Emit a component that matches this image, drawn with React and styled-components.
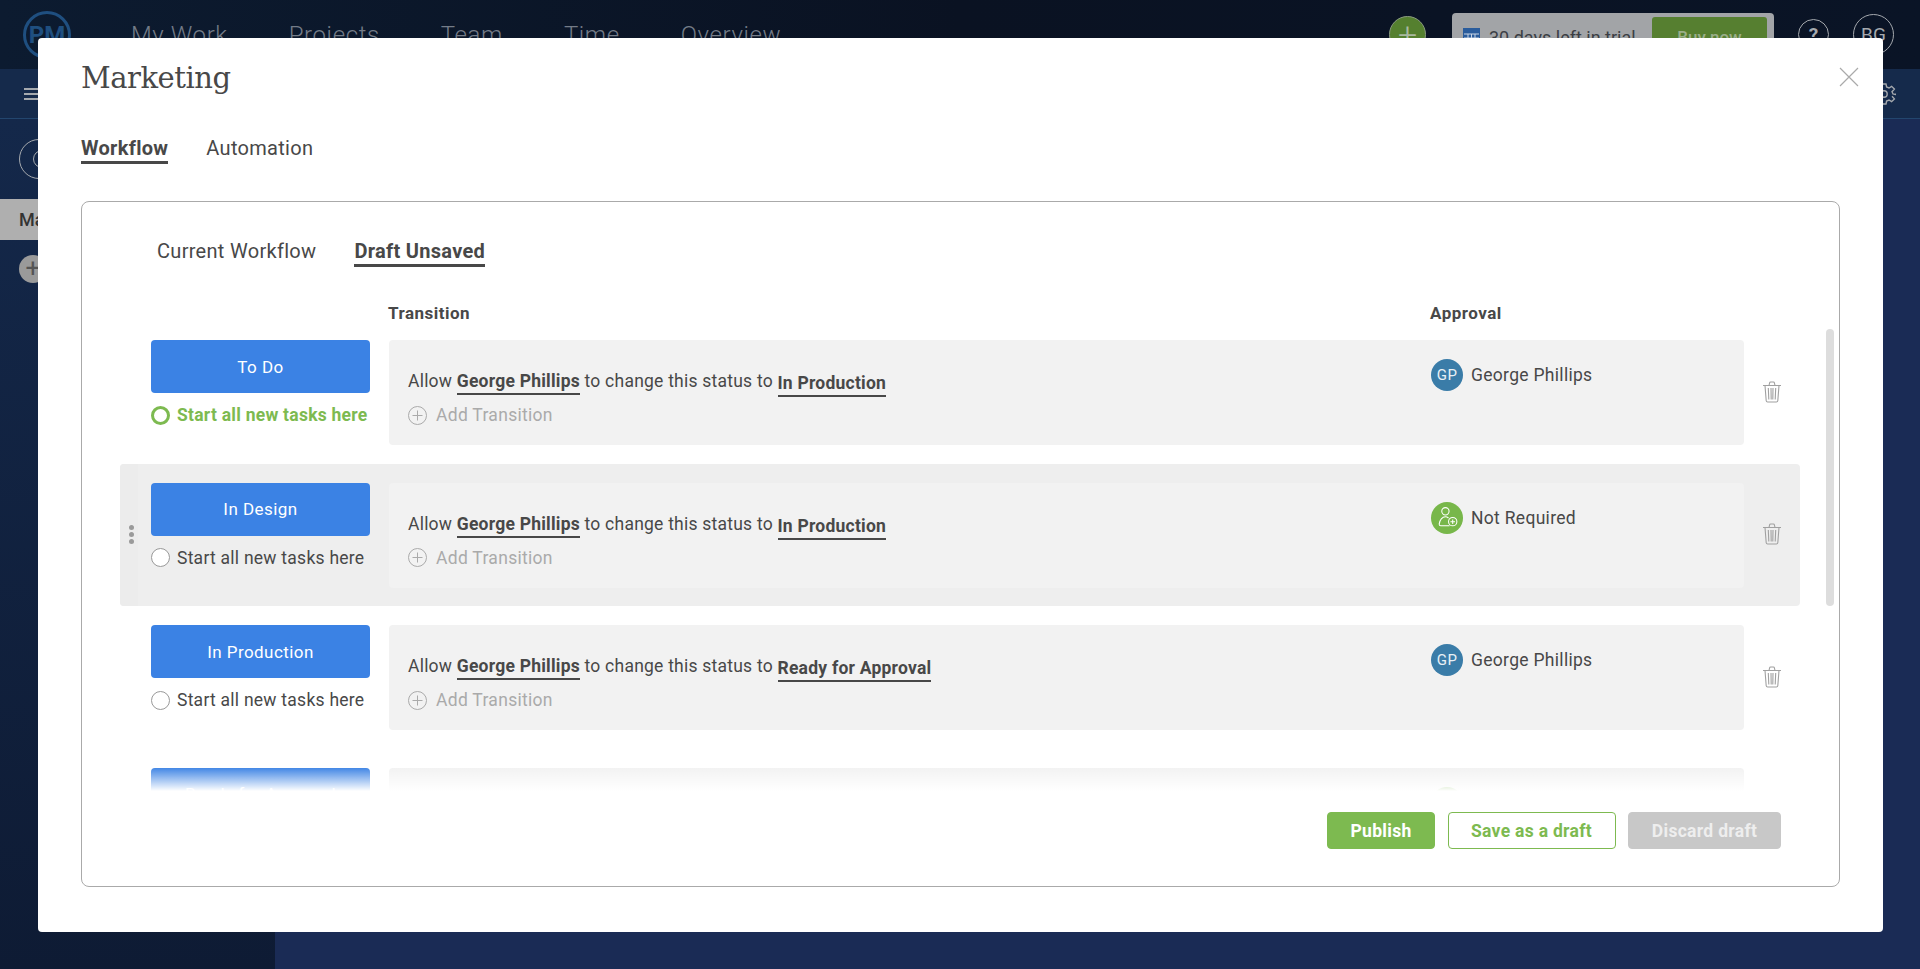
import React from "react";
import styled, { createGlobalStyle } from "styled-components";

const GlobalStyle = createGlobalStyle`
  html, body { margin: 0; padding: 0; height: 100%; overflow: hidden; background: #1a2b55; }
  body { font-family: Roboto, "Liberation Sans", sans-serif; color: #484848; }
  * { box-sizing: border-box; }
`;

const Page = styled.div`
  width: 1920px;
  height: 969px;
  display: flex;
  flex-direction: column;
  overflow: hidden;
`;

const TopNav = styled.header`
  height: 69px;
  flex: none;
  display: flex;
  align-items: center;
  padding: 0 26px 0 23px;
  background: linear-gradient(90deg, #0c1b30 0%, #0a1222 50%, #0a1426 100%);
`;

const Logo = styled.div`
  width: 48px;
  height: 48px;
  border: 3px solid #1f4f80;
  border-radius: 50%;
  display: flex;
  align-items: center;
  justify-content: center;
  color: #1f4f80;
  font-size: 24px;
  font-weight: 700;
`;

const NavLinks = styled.nav`
  display: flex;
  gap: 61px;
  margin-left: 60px;
  flex: 1;
`;

const NavLink = styled.span`
  font-size: 24px;
  font-weight: 300;
  letter-spacing: 0.6px;
  color: #747c88;
`;

const CreateButton = styled.div`
  width: 37px;
  height: 37px;
  border-radius: 50%;
  background: #55802f;
  border: 1px solid #8a9a80;
  color: #a9b8a0;
  font-size: 34px;
  font-weight: 300;
  display: flex;
  align-items: center;
  justify-content: center;
  margin-top: -1px;
`;

const TrialBox = styled.div`
  width: 322px;
  height: 48px;
  margin: 13px 0 8px 26px;
  padding: 4px 7px 4px 11px;
  background: #a2a4a7;
  border-radius: 4px;
  display: flex;
  align-items: center;
  align-self: flex-start;
`;

const TrialText = styled.span`
  font-size: 18px;
  color: #3b3e44;
  margin-left: 9px;
  flex: 1;
`;

const BuyNow = styled.div`
  width: 115px;
  height: 40px;
  background: #567f30;
  border-radius: 3px;
  color: #9aae8a;
  font-size: 17px;
  font-weight: 500;
  display: flex;
  align-items: center;
  justify-content: center;
`;

const RoundIcon = styled.div`
  width: ${(p) => p.$size}px;
  height: ${(p) => p.$size}px;
  margin-left: ${(p) => p.$left}px;
  border: 1px solid #a5a9ae;
  border-radius: 50%;
  color: #a5a9ae;
  font-size: 19px;
  font-weight: ${(p) => p.$weight || 400};
  display: flex;
  align-items: center;
  justify-content: center;
`;

const SubBar = styled.div`
  height: 50px;
  flex: none;
  display: flex;
  align-items: center;
  justify-content: space-between;
  padding: 0 24px;
  background: #152a4b;
  border-bottom: 1px solid #23466e;
`;

const Hamburger = styled.div`
  width: 15px;
  height: 12px;
  border-top: 2px solid #a5a9ae;
  border-bottom: 2px solid #a5a9ae;
  position: relative;
  &::after {
    content: "";
    position: absolute;
    left: 0;
    right: 0;
    top: 3px;
    height: 2px;
    background: #a5a9ae;
  }
`;

const Body = styled.div`
  flex: 1;
  display: flex;
`;

const Sidebar = styled.aside`
  width: 275px;
  background: linear-gradient(180deg, #14284a 0%, #0e1b34 100%);
  padding-top: 20px;
`;

const SearchCircle = styled.div`
  width: 50px;
  height: 40px;
  margin-left: 19px;
  padding-left: 13px;
  border: 1px solid #a5a9ae;
  border-radius: 20px;
  display: flex;
  align-items: center;
`;

const SearchGlass = styled.span`
  width: 18px;
  height: 18px;
  border: 1px solid #a5a9ae;
  border-radius: 50%;
`;

const SidebarItem = styled.div`
  height: 41px;
  margin-top: 20px;
  padding-left: 19px;
  background: #afafaf;
  color: #333;
  font-size: 18px;
  font-weight: 500;
  line-height: 41px;
`;

const SidebarAdd = styled.div`
  width: 28px;
  height: 28px;
  margin: 15px 0 0 19px;
  background: #9a9a9a;
  border-radius: 50%;
  color: #555;
  font-size: 26px;
  line-height: 26px;
  text-align: center;
`;

const Main = styled.main`
  flex: 1;
  background: #1a2b55;
`;

const Modal = styled.section`
  position: fixed;
  left: 38px;
  top: 38px;
  width: 1845px;
  height: 894px;
  background: #fff;
  border-radius: 4px;
  padding: 20px 43px 0;
  display: flex;
  flex-direction: column;
`;

const CloseButton = styled.button`
  position: absolute;
  top: 29px;
  right: 24px;
  width: 20px;
  height: 20px;
  padding: 0;
  border: 0;
  background: none;
`;

const Title = styled.h1`
  margin: 0;
  height: 40px;
  font-family: "DejaVu Serif", "Liberation Serif", serif;
  font-size: 29px;
  line-height: 40px;
  font-weight: 400;
  letter-spacing: -0.45px;
  color: #484848;
`;

const Tabs = styled.div`
  display: flex;
  gap: ${(p) => p.$gap}px;
  margin: ${(p) => p.$margin};
`;

const Tab = styled.span`
  height: 29px;
  font-size: 20px;
  line-height: 27px;
  letter-spacing: 0.3px;
  font-weight: ${(p) => (p.$active ? 700 : 400)};
  color: #484848;
  border-bottom: ${(p) => (p.$active ? "3px solid #484848" : "3px solid transparent")};
`;

const Panel = styled.div`
  position: relative;
  margin-top: 37px;
  height: 686px;
  border: 1px solid #aaa;
  border-radius: 8px;
  flex: none;
`;

const HeaderRow = styled.div`
  display: flex;
  margin: 36px 0 0 306px;
  height: 18px;
  font-size: 17px;
  font-weight: 700;
  letter-spacing: 0.5px;
  line-height: 21px;
  color: #484848;
`;

const HeaderCell = styled.span`
  width: ${(p) => p.$width}px;
`;

const ScrollArea = styled.div`
  position: relative;
  margin: 0 0 0 38px;
  width: 1714px;
  height: 470px;
  overflow: hidden;
`;

const Row = styled.div`
  width: 1680px;
  height: 142.5px;
  padding: 19px 0 0 31px;
  display: flex;
  align-items: flex-start;
  position: relative;
  border-radius: 4px;
  background: ${(p) => (p.$hover ? "#eee" : "transparent")};
`;

const DragHandle = styled.div`
  position: absolute;
  left: 0;
  top: 0;
  bottom: 0;
  width: 18px;
  display: flex;
  flex-direction: column;
  align-items: center;
  justify-content: center;
  gap: 2px;
  background: #ececec;
  border-radius: 4px 0 0 4px;
  padding-left: 4px;
`;

const Dot = styled.i`
  width: 5px;
  height: 5px;
  border-radius: 50%;
  background: #9a9a9a;
`;

const StatusColumn = styled.div`
  width: 219px;
  flex: none;
`;

const StatusButton = styled.div`
  height: 53px;
  background: #3b82e4;
  border-radius: 4px;
  color: #fff;
  font-size: 17px;
  letter-spacing: 0.45px;
  display: flex;
  align-items: center;
  justify-content: center;
`;

const StartOption = styled.div`
  display: flex;
  align-items: center;
  gap: 7px;
  margin-top: 10px;
  height: 24px;
  font-size: 17.5px;
  letter-spacing: 0.25px;
  font-weight: ${(p) => (p.$selected ? 700 : 400)};
  color: ${(p) => (p.$selected ? "#7dba50" : "#484848")};
  white-space: nowrap;
`;

const Radio = styled.span`
  width: 19px;
  height: 19px;
  flex: none;
  border-radius: 50%;
  background: #fff;
  border: ${(p) => (p.$selected ? "3px solid #7dba50" : "1px solid #999")};
`;

const TransitionCard = styled.div`
  width: 1355px;
  height: 105px;
  margin-left: 19px;
  padding: 19px 18px 0 19px;
  background: #f2f2f2;
  border-radius: 4px;
  display: flex;
  flex: none;
`;

const TransitionBody = styled.div`
  width: 1023px;
  padding-top: 9px;
  flex: none;
`;

const TransitionLine = styled.div`
  height: 28px;
  font-size: 17.5px;
  letter-spacing: 0.23px;
  line-height: 26px;
  color: #484848;
  white-space: nowrap;
`;

const Strong = styled.b`
  display: inline-block;
  font-weight: 700;
  line-height: 23px;
  border-bottom: 2px solid #484848;
  vertical-align: ${(p) => (p.$target ? "-2px" : "0")};
`;

const AddTransition = styled.div`
  display: flex;
  align-items: center;
  gap: 9px;
  margin-top: 9px;
  height: 20px;
  font-size: 17.5px;
  letter-spacing: 0.3px;
  color: #aaa;
`;

const Approver = styled.div`
  display: flex;
  align-items: center;
  gap: 8px;
  font-size: 17.5px;
  letter-spacing: 0.3px;
  height: 32px;
  color: #484848;
`;

const Avatar = styled.span`
  width: 32px;
  height: 32px;
  border-radius: 50%;
  background: ${(p) => p.$color};
  color: #e8f0f5;
  font-size: 15px;
  display: flex;
  align-items: center;
  justify-content: center;
`;

const DeleteButton = styled.div`
  width: 56px;
  height: 105px;
  padding-bottom: 2px;
  display: flex;
  align-items: center;
  justify-content: center;
`;

const ScrollThumb = styled.div`
  position: absolute;
  top: 8px;
  right: 0;
  width: 8px;
  height: 277px;
  background: #ddd;
  border-radius: 4px;
`;

const Fade = styled.div`
  position: absolute;
  left: 0;
  right: 0;
  bottom: 0;
  height: 24px;
  background: linear-gradient(180deg, rgba(255, 255, 255, 0) 0%, #fff 100%);
`;

const Footer = styled.div`
  display: flex;
  justify-content: flex-end;
  gap: 12.5px;
  margin: 21px 58px 0 0;
`;

const FooterButton = styled.button`
  height: 37px;
  width: ${(p) => p.$width}px;
  padding: 0;
  border-radius: 4px;
  font-family: inherit;
  font-size: 17.5px;
  font-weight: 700;
  letter-spacing: 0.3px;
  color: ${(p) => p.$color};
  background: ${(p) => p.$bg};
  border: 1px solid ${(p) => p.$border};
`;

const TrashIcon = () => (
  <svg width="20" height="22" viewBox="0 0 20 22" fill="none" stroke="#a0a0a0" strokeWidth="1.1">
    <path d="M1 4.500h18M7 4.500l.6-2.700c.1-.5.4-.8 1-.8h2.800c.6 0 .9.3 1 .8l.6 2.700" />
    <path d="M3 4.500l1.200 15.200c.1.800.6 1.300 1.400 1.300h8.800c.8 0 1.300-.5 1.400-1.300L17 4.500" />
    <path d="M6.300 7l.5 11.500M9 7l.2 11.500M11 7l-.2 11.500M13.700 7l-.5 11.500" />
  </svg>
);

const PlusCircle = () => (
  <svg width="19" height="19" viewBox="0 0 19 19" fill="none" stroke="#aaa" strokeWidth="1">
    <circle cx="9.500" cy="9.500" r="9" />
    <path d="M9.500 4.500v10M4.500 9.500h10" />
  </svg>
);

const PersonPlus = () => (
  <svg width="25" height="25" viewBox="0 0 24 24" fill="none" stroke="#fff" strokeWidth="1">
    <circle cx="10" cy="6" r="3.500" />
    <path d="M13 12.500c-1-.8-1.800-1.200-3-1.200-3 0-5.500 3-6 7 0 1 .5 1.700 1.500 1.700H14" />
    <circle cx="17" cy="16" r="4" />
    <path d="M17 13.800v4.400M14.800 16h4.400" />
  </svg>
);

const CalendarIcon = () => (
  <svg width="17" height="18" viewBox="0 0 17 18">
    <rect width="17" height="18" fill="#2a5c9c" />
    <path d="M1 6h15M1 10h15M5 6v10M8.500 6v10M12 6v10" stroke="#c8d4e4" strokeWidth="1" />
  </svg>
);

const GearIcon = () => (
  <svg width="24" height="24" viewBox="0 0 24 24" fill="none" stroke="#a5a9ae" strokeWidth="1.400">
    <circle cx="12" cy="12" r="3.200" />
    <path d="M10 2h4l.6 3 2.400 1 2.600-1.700 2.800 2.800L20 9.700l1 2.300 3 .6v-1.200M10 22h4l.6-3 2.400-1 2.600 1.700 2.800-2.800L20 14.300" />
  </svg>
);

const rows = [
  { status: "To Do", target: "In Production", approver: "George Phillips", selected: true },
  { status: "In Design", target: "In Production", approver: "Not Required", hover: true },
  { status: "In Production", target: "Ready for Approval", approver: "George Phillips" },
  { status: "Ready for Approval", target: "In Production", approver: "Not Required" },
];

const WorkflowRow = ({ row }) => (
  <Row $hover={row.hover}>
    {row.hover ? (
      <DragHandle>
        <Dot />
        <Dot />
        <Dot />
      </DragHandle>
    ) : null}
    <StatusColumn>
      <StatusButton>{row.status}</StatusButton>
      <StartOption $selected={row.selected}>
        <Radio $selected={row.selected} />
        Start all new tasks here
      </StartOption>
    </StatusColumn>
    <TransitionCard>
      <TransitionBody>
        <TransitionLine>
          Allow <Strong>George Phillips</Strong> to change this status to <Strong $target>{row.target}</Strong>
        </TransitionLine>
        <AddTransition>
          <PlusCircle />
          Add Transition
        </AddTransition>
      </TransitionBody>
      <Approver>
        {row.approver === "Not Required" ? (
          <Avatar $color="#78b74a">
            <PersonPlus />
          </Avatar>
        ) : (
          <Avatar $color="#3a7ca8">GP</Avatar>
        )}
        {row.approver}
      </Approver>
    </TransitionCard>
    <DeleteButton>
      <TrashIcon />
    </DeleteButton>
  </Row>
);

const App = () => (
  <>
    <GlobalStyle />
    <Page>
      <TopNav>
        <Logo>PM</Logo>
        <NavLinks>
          <NavLink>My Work</NavLink>
          <NavLink>Projects</NavLink>
          <NavLink>Team</NavLink>
          <NavLink>Time</NavLink>
          <NavLink>Overview</NavLink>
        </NavLinks>
        <CreateButton>+</CreateButton>
        <TrialBox>
          <CalendarIcon />
          <TrialText>30 days left in trial</TrialText>
          <BuyNow>Buy now</BuyNow>
        </TrialBox>
        <RoundIcon $size={31} $left={24} $weight={700}>?</RoundIcon>
        <RoundIcon $size={41} $left={24}>BG</RoundIcon>
      </TopNav>
      <SubBar>
        <Hamburger />
        <GearIcon />
      </SubBar>
      <Body>
        <Sidebar>
          <SearchCircle>
            <SearchGlass />
          </SearchCircle>
          <SidebarItem>Marketing</SidebarItem>
          <SidebarAdd>+</SidebarAdd>
        </Sidebar>
        <Main />
      </Body>
    </Page>
    <Modal>
      <CloseButton aria-label="Close">
        <svg width="20" height="20" viewBox="0 0 20 20" stroke="#aaa" strokeWidth="1.2">
          <path d="M1 1l18 18M19 1L1 19" />
        </svg>
      </CloseButton>
      <Title>Marketing</Title>
      <Tabs $gap={38} $margin="37px 0 0 0">
        <Tab $active>Workflow</Tab>
        <Tab>Automation</Tab>
      </Tabs>
      <Panel>
        <Tabs $gap={38} $margin="36px 0 0 75px">
          <Tab>Current Workflow</Tab>
          <Tab $active>Draft Unsaved</Tab>
        </Tabs>
        <HeaderRow>
          <HeaderCell $width={1042}>Transition</HeaderCell>
          <HeaderCell>Approval</HeaderCell>
        </HeaderRow>
        <ScrollArea>
          {rows.map((row) => (
            <WorkflowRow key={row.status} row={row} />
          ))}
          <ScrollThumb />
          <Fade />
        </ScrollArea>
        <Footer>
          <FooterButton $width={108} $bg="#7dba50" $border="#7dba50" $color="#fff">Publish</FooterButton>
          <FooterButton $width={168} $bg="#fff" $border="#7dba50" $color="#7dba50">Save as a draft</FooterButton>
          <FooterButton $width={153} $bg="#c8c8c8" $border="#c8c8c8" $color="#eee">Discard draft</FooterButton>
        </Footer>
      </Panel>
    </Modal>
  </>
);

export default App;
